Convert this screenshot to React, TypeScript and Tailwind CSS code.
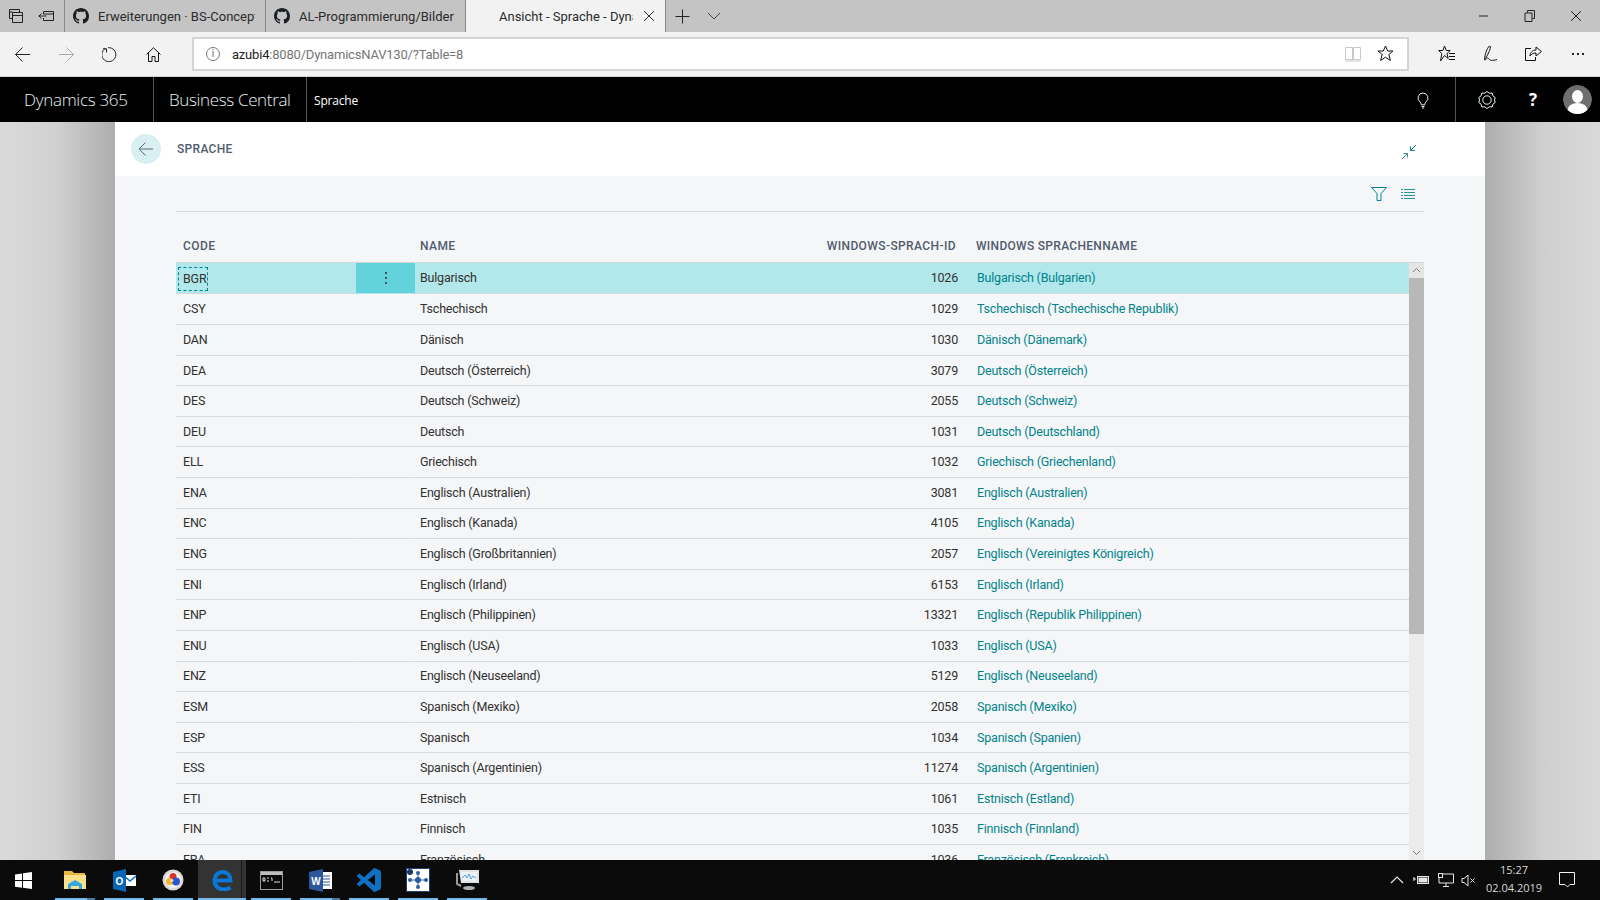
import React from "react";

const rows: [string, string, string, string][] = [
  ["BGR", "Bulgarisch", "1026", "Bulgarisch (Bulgarien)"],
  ["CSY", "Tschechisch", "1029", "Tschechisch (Tschechische Republik)"],
  ["DAN", "Dänisch", "1030", "Dänisch (Dänemark)"],
  ["DEA", "Deutsch (Österreich)", "3079", "Deutsch (Österreich)"],
  ["DES", "Deutsch (Schweiz)", "2055", "Deutsch (Schweiz)"],
  ["DEU", "Deutsch", "1031", "Deutsch (Deutschland)"],
  ["ELL", "Griechisch", "1032", "Griechisch (Griechenland)"],
  ["ENA", "Englisch (Australien)", "3081", "Englisch (Australien)"],
  ["ENC", "Englisch (Kanada)", "4105", "Englisch (Kanada)"],
  ["ENG", "Englisch (Großbritannien)", "2057", "Englisch (Vereinigtes Königreich)"],
  ["ENI", "Englisch (Irland)", "6153", "Englisch (Irland)"],
  ["ENP", "Englisch (Philippinen)", "13321", "Englisch (Republik Philippinen)"],
  ["ENU", "Englisch (USA)", "1033", "Englisch (USA)"],
  ["ENZ", "Englisch (Neuseeland)", "5129", "Englisch (Neuseeland)"],
  ["ESM", "Spanisch (Mexiko)", "2058", "Spanisch (Mexiko)"],
  ["ESP", "Spanisch", "1034", "Spanisch (Spanien)"],
  ["ESS", "Spanisch (Argentinien)", "11274", "Spanisch (Argentinien)"],
  ["ETI", "Estnisch", "1061", "Estnisch (Estland)"],
  ["FIN", "Finnisch", "1035", "Finnisch (Finnland)"],
  ["FRA", "Französisch", "1036", "Französisch (Frankreich)"],
];

const Ln = ({ d, c = "#1a1a1a", s = 16, w = 1, vb = 16 }: { d: string; c?: string; s?: number; w?: number; vb?: number }) => (
  <svg width={s} height={s} viewBox={`0 0 ${vb} ${vb}`} fill="none" stroke={c} strokeWidth={w}>
    <path d={d} />
  </svg>
);

const GitHub = () => (
  <svg width="16" height="16" viewBox="0 0 16 16" fill="#1b1f23">
    <path d="M8 0C3.58 0 0 3.58 0 8c0 3.54 2.29 6.53 5.47 7.59.4.07.55-.17.55-.38 0-.19-.01-.82-.01-1.49-2.01.37-2.53-.49-2.69-.94-.09-.23-.48-.94-.82-1.13-.28-.15-.68-.52-.01-.53.63-.01 1.08.58 1.23.82.72 1.21 1.87.87 2.33.66.07-.52.28-.87.51-1.07-1.78-.2-3.64-.89-3.64-3.95 0-.87.31-1.59.82-2.15-.08-.2-.36-1.02.08-2.12 0 0 .67-.21 2.2.82.64-.18 1.32-.27 2-.27s1.36.09 2 .27c1.53-1.04 2.2-.82 2.2-.82.44 1.1.16 1.92.08 2.12.51.56.82 1.27.82 2.15 0 3.07-1.87 3.75-3.65 3.95.29.25.54.73.54 1.48 0 1.07-.01 1.93-.01 2.2 0 .21.15.46.55.38A8.01 8.01 0 0 0 16 8c0-4.42-3.58-8-8-8z" />
  </svg>
);

function Tab({ title, active, w = 200 }: { title: string; active?: boolean; w?: number }) {
  return (
    <div
      className={`h-full flex items-center shrink-0 border-r border-[#8a8a8a] ${active ? "bg-[#f2f2f2] pl-[33px]" : "pl-[8px]"}`}
      style={{ width: w }}
    >
      {!active && <span className="w-[16px] mr-[9px] shrink-0 flex"><GitHub /></span>}
      <span className={`overflow-hidden whitespace-nowrap text-[13px] text-[#2b2b2b] pt-[1px] ${active ? "w-[134px]" : "w-[157px]"}`}>{title}</span>
      {active && (
        <span className="ml-[10px] flex">
          <Ln s={12} vb={12} c="#333" d="M1 1l10 10M11 1L1 11" />
        </span>
      )}
    </div>
  );
}

function Task({ children, active, w = 40, ml = 9, dark }: { children: React.ReactNode; active?: boolean; w?: number; ml?: number; dark?: boolean }) {
  return (
    <div
      className={`relative h-full flex items-center justify-center shrink-0 ${active ? "bg-[#333333]" : ""}`}
      style={{ width: w, marginLeft: ml }}
    >
      {children}
      <div className="absolute left-0 right-0 bottom-0 h-[2px] bg-[#76b9ed]" />
      {dark && <div className="absolute right-0 bottom-0 h-[2px] w-[8px] bg-[#4d7a9c]" />}
    </div>
  );
}

export default function App() {
  return (
    <div className="w-[1600px] h-[900px] overflow-hidden flex flex-col font-['Roboto',sans-serif] bg-[#d4d4d4]">
      {/* tab strip */}
      <div className="h-[32px] shrink-0 bg-[#c4c4c4] flex items-center">
        <div className="w-[65px] h-full flex items-center border-r border-[#8a8a8a] shrink-0 pl-[9px] gap-[15px]">
          <Ln d="M0.500 0.500h10v3M0.500 0.500v9h3M3.500 3.500h10v10h-10zM3.500 6.500h10M0.500 3h3" s={14} vb={14} c="#222" />
          <Ln d="M5.500 3.500h10v9h-10M5.500 3.500v2.500M5.500 10v2.500M5.500 6h10M0.500 8h8M3.500 5.500L1 8l2.500 2.500" s={16} c="#222" />
        </div>
        <Tab title="Erweiterungen · BS-Concept" w={201} />
        <Tab title="AL-Programmierung/Bilder" w={200} />
        <Tab active title="Ansicht - Sprache - Dynamics" />
        <div className="flex items-center ml-[9px]">
          <Ln s={15} vb={15} c="#222" d="M7.500 0.500v14M0.500 7.500h14" />
          <span className="ml-[17px] flex"><Ln s={14} vb={14} c="#444" d="M1 4l6 6 6-6" /></span>
        </div>
        <div className="ml-auto flex items-center">
          <span className="w-[46px] flex justify-center"><Ln s={12} vb={12} c="#222" d="M1 6h9" /></span>
          <span className="w-[46px] flex justify-center"><Ln s={12} vb={12} c="#222" d="M3.500 2.500v-2h7v8h-2M1 3h7v8.500H1z" /></span>
          <span className="w-[46px] flex justify-center mr-[1px]"><Ln s={12} vb={12} c="#222" d="M1 1l10 10M11 1L1 11" /></span>
        </div>
      </div>

      {/* address bar */}
      <div className="h-[45px] shrink-0 bg-[#f2f2f2] border-b border-[#cfcfcf] flex items-center">
        <div className="w-[192px] flex items-center shrink-0">
          <span className="w-[45px] pl-[15px] flex"><Ln s={15} vb={15} c="#222" d="M0.500 7.500h15M7.500 0.500l-7 7 7 7" /></span>
          <span className="w-[44px] pl-[14px] flex"><Ln s={15} vb={15} c="#aaa" d="M0 7.500h15M7.500 0.500l7 7-7 7" /></span>
          <span className="w-[44px] pl-[13px] flex"><Ln s={15} vb={15} c="#222" d="M3.500 1.500A7 7 0 1 0 6 0.700M0.800 1.800h3.700v3.700" /></span>
          <span className="pl-[13px] flex"><Ln s={15} vb={15} c="#111" d="M0.500 7.500L7.500 0.800l7 6.700M2.500 6v8.500h3.500v-5h3v5h3.500V6" /></span>
        </div>
        <div className="w-[1217px] h-[34px] bg-white border-2 border-[#d4d4d4] flex items-center shrink-0 mt-[-1px]">
          <span className="ml-[12px] w-[14px] h-[14px] rounded-full border border-[#777] text-[#666] text-[10px] leading-[12px] text-center">i</span>
          <span className="ml-[12px] text-[13px] tracking-[-0.2px] text-[#222] mt-[2px]">azubi4<span className="text-[#767676]">:8080/DynamicsNAV130/?Table=8</span></span>
          <span className="ml-auto flex"><Ln s={16} vb={16} c="#c8c8c8" d="M0.500 1.500h7v12h-7zM8.500 1.500h7v12h-7zM7.500 13.500c.4.800.6.800 1 0M0.500 15h15" /></span>
          <span className="ml-[16px] mr-[13px] flex"><Ln s={17} vb={17} c="#111" d="M8.500 1l2.200 5h5.300l-4.200 3.500 1.600 6-4.900-3.300-4.900 3.300 1.600-6L1 6h5.300z" /></span>
        </div>
        <div className="flex items-center">
          <span className="w-[43px] ml-[29px] flex"><Ln s={18} vb={18} c="#111" d="M6.500 1l1.700 4.500h4L9 8.500l1.200 5-3.700-3L2.500 16l1.300-7.500L0.700 5.500h4.200zM11 8.500h6M11 11.500h6M11 14.500h6" /></span>
          <span className="w-[43px] flex"><Ln s={18} vb={18} c="#111" d="M3.500 14.500C4 9 6 3 8.500 1c1.500 0 1 3-1 7-1.500 3-3 5.500-4 6.500zM4 15.500c2-3 3-3 4-1.500s3 2 8 .5" /></span>
          <span className="w-[48px] flex"><Ln s={18} vb={18} c="#111" d="M7 3.500H1.500v12h10V12M6 11c0-3.500 2.500-6 6-6V2l5.500 4.500L12 11V8c-3 0-4.500 1-6 3z" /></span>
          <span className="flex gap-[3px]">
            <i className="w-[2px] h-[2px] bg-[#222] block" /><i className="w-[2px] h-[2px] bg-[#222] block" /><i className="w-[2px] h-[2px] bg-[#222] block" />
          </span>
        </div>
      </div>

      {/* app bar */}
      <div className="h-[45px] shrink-0 bg-black flex items-stretch text-white font-['Open_Sans',sans-serif]">
        <div className="w-[154px] border-r border-[#555] flex items-center pl-[24px] text-[17px] font-light tracking-[-0.3px] text-[#e8f2f4]">Dynamics 365</div>
        <div className="w-[153px] border-r border-[#555] flex items-center pl-[15px] text-[17px] font-light tracking-[-0.35px] text-[#e8f2f4]">Business Central</div>
        <div className="flex items-center pl-[7px] pt-[2px] text-[12px] tracking-[-0.2px]">Sprache</div>
        <div className="ml-auto w-[66px] border-r border-[#555] flex items-center pl-[24px]">
          <Ln s={18} vb={18} c="#e4f3f6" d="M9 2a5 5 0 0 0-3.200 8.800c.9.800 1.400 1.700 1.500 3h3.400c.1-1.300.6-2.200 1.500-3A5 5 0 0 0 9 2zM7.500 15.500h3M8 17h2" />
        </div>
        <div className="w-[107px] flex items-center shrink-0">
          <span className="ml-[22px] flex"><Ln s={18} vb={18} c="#e4f3f6" d="M9 0.500l2.300 1.700 2.800-.2.800 2.800 2.300 1.700L16.500 9l.700 2.500-2.300 1.700-.8 2.800-2.800-.2L9 17.500l-2.300-1.700-2.800.2-.8-2.800-2.300-1.700L1.500 9 .800 6.500l2.300-1.700.8-2.800 2.800.2zM9 4.800a4.200 4.200 0 1 0 0 8.400 4.200 4.200 0 0 0 0-8.400z" /></span>
          <span className="ml-[33px] text-[17px] font-bold">?</span>
        </div>
        <div className="w-[29px] h-[29px] rounded-full self-center mr-[8px] overflow-hidden flex justify-center shrink-0">
          <svg width="29" height="29" viewBox="0 0 29 29"><circle cx="14.500" cy="14.500" r="14.500" fill="#6e6e6e" /><ellipse cx="14.500" cy="11.500" rx="5.500" ry="6.500" fill="#fff" /><ellipse cx="14.500" cy="25" rx="10" ry="7" fill="#fff" /></svg>
        </div>
      </div>

      {/* workspace */}
      <div className="flex-1 min-h-0 flex">
        <div className="w-[115px] shrink-0 bg-linear-to-r from-[#dadada] via-[#d0d0d0] to-[#adadad]" />
        <div className="w-[1370px] shrink-0 flex flex-col bg-[#f5f6f8] min-h-0">
          <div className="h-[54px] shrink-0 bg-white flex items-center pl-[16px] pr-[68px]">
            <div className="w-[30px] h-[30px] rounded-full bg-[#d9f0f3] flex items-center justify-center">
              <Ln s={16} vb={16} c="#5f6b76" d="M15 8H1M7.500 1.500L1 8l6.500 6.500" />
            </div>
            <span className="ml-[16px] text-[12px] font-medium text-[#505c6d] mt-[-1px] tracking-[0.3px]">SPRACHE</span>
            <span className="ml-auto flex mt-[6px]">
              <svg width="16" height="16" viewBox="0 0 16 16" fill="none" stroke="#00838f"><path d="M15 1L9.500 6.500M9.500 2.500v4h4" /><path d="M1 15l5.500-5.500M6.500 13.500v-4h-4" stroke="#3f8c98" /></svg>
            </span>
          </div>
          <div className="mx-[61px] flex-1 min-h-0 flex flex-col">
            <div className="h-[36px] shrink-0 border-b border-[#d5d6d8] flex items-center justify-end pr-[9px] pt-[1px]">
              <svg width="16" height="14" viewBox="0 0 16 14" fill="none" stroke="#00838f"><path d="M0.500 0.500h15L10 6.500v7H6v-7z" /></svg>
              <svg className="ml-[14px]" width="14" height="12" viewBox="0 0 14 12" fill="none" stroke="#2a8f9c"><path d="M0 1.500h2M3 1.500h11M0 4.500h2M3 4.500h11M0 7.500h2M3 7.500h11M0 10.500h2M3 10.500h11" /></svg>
            </div>
            <div className="h-[50px] shrink-0 flex items-center pt-[17px] text-[12px] font-medium text-[#505c6d] tracking-[0.4px]">
              <span className="w-[244px] pl-[7px]">CODE</span>
              <span className="w-[329px]">NAME</span>
              <span className="w-[207px] text-right whitespace-nowrap">WINDOWS-SPRACH-ID</span>
              <span className="ml-[20px] tracking-[0.3px]">WINDOWS SPRACHENNAME</span>
            </div>
            <div className="flex-1 min-h-0 flex overflow-hidden border-t border-[#d5d6d8]">
              <div className="flex-1 min-w-0 text-[12.5px] tracking-[-0.2px] text-[#323130]">
                {rows.map((r, i) => {
                  const sel = i === 0;
                  return (
                    <div key={r[0]} className={`flex ${sel ? "bg-[#b2e8ec] h-[31.4px]" : "h-[30.6px]"}`}>
                      <div className="w-[180px] shrink-0 border-b border-[#d8d9db] flex items-center pl-[2px] pt-[1px]">
                        {sel ? (
                          <span className="h-[24px] w-[30px] border border-dashed border-[#00838f] pl-[4px] leading-[22px]">{r[0]}</span>
                        ) : (
                          <span className="pl-[5px]">{r[0]}</span>
                        )}
                      </div>
                      <div className={`w-[59px] shrink-0 flex items-center justify-center border-b border-l border-r ${sel ? "bg-[#62d3db] border-[#62d3db] border-b-[#b2e8ec]" : "border-l-[#f5f6f8] border-r-[#f5f6f8] border-b-[#d8d9db]"}`}>
                        {sel && (
                          <span className="flex flex-col gap-[3px]">
                            <i className="w-[2px] h-[2px] rounded-full bg-[#323130] block" /><i className="w-[2px] h-[2px] rounded-full bg-[#323130] block" /><i className="w-[2px] h-[2px] rounded-full bg-[#323130] block" />
                          </span>
                        )}
                      </div>
                      <div className="flex-1 border-b border-[#d8d9db] flex items-center pt-[1px]">
                        <span className="w-[334px] pl-[5px]">{r[1]}</span>
                        <span className="w-[209px] text-right">{r[2]}</span>
                        <span className="ml-[19px] text-[#00838a]">{r[3]}</span>
                      </div>
                    </div>
                  );
                })}
              </div>
              <div className="w-[15px] shrink-0 bg-[#ececec] flex flex-col">
                <div className="h-[15px] shrink-0 bg-[#e5e5e5] flex items-center justify-center"><Ln s={9} vb={9} c="#777" d="M1 6l3.500-3.500L8 6" /></div>
                <div className="h-[356px] shrink-0 bg-[#b8b8b8]" />
                <div className="flex-1" />
                <div className="h-[15px] shrink-0 flex items-center justify-center"><Ln s={9} vb={9} c="#777" d="M1 3l3.500 3.500L8 3" /></div>
              </div>
            </div>
          </div>
        </div>
        <div className="flex-1 bg-linear-to-r from-[#adadad] via-[#cfcfcf] to-[#dadada]" />
      </div>

      {/* taskbar */}
      <div className="h-[40px] shrink-0 bg-[#0b0b0b] flex items-stretch relative font-['Open_Sans',sans-serif]">
        <div className="w-[46px] flex items-center justify-center shrink-0">
          <svg width="17" height="17" viewBox="0 0 17 17" fill="#fff"><path d="M0 2.400L7 1.400v6.700H0zM8 1.300L17 0v8.100H8zM0 9h7v6.700L0 14.700zM8 9h9v8L8 15.800z" /></svg>
        </div>
        <Task dark>
          <svg width="22" height="19" viewBox="0 0 22 19"><path d="M0 0h8l2 2h11v4H0z" fill="#e8b93f" /><rect x="0" y="4" width="22" height="14" fill="#fbe08c" /><path d="M4 18v-5l7-4 7 4v5h-3v-3H7v3z" fill="#35a7e0" /></svg>
        </Task>
        <Task>
          <svg width="23" height="23" viewBox="0 0 23 23"><rect x="10" y="6" width="13" height="11" fill="#fff" /><path d="M11 7l6 5 6-5" fill="none" stroke="#0a6dbd" strokeWidth="1.500" /><path d="M0 3l13-3v23L0 20z" fill="#0a66b5" /><text x="6.500" y="15.500" textAnchor="middle" fontSize="10" fontWeight="700" fill="#fff" fontFamily="Liberation Sans, sans-serif">O</text></svg>
        </Task>
        <Task>
          <svg width="22" height="22" viewBox="0 0 22 22"><circle cx="11" cy="11" r="10.500" fill="#dcd8d4" /><circle cx="11" cy="11" r="8" fill="#f5f1ee" /><circle cx="11" cy="7.500" r="3.500" fill="#d8362a" /><circle cx="7.500" cy="12.500" r="3.500" fill="#f3b52e" /><circle cx="14" cy="12.500" r="4" fill="#2f56c7" /><circle cx="10" cy="11.500" r="1.500" fill="#fff" opacity=".7" /></svg>
        </Task>
        <Task active w={48} ml={5}>
          <svg width="21" height="21" viewBox="0 0 21 21" fill="none" stroke="#0b78d7" strokeWidth="4"><path d="M2.500 10.500h16c0-5-3-8.500-8-8.500-4.500 0-8 3.500-8 8.500 0 5.500 4 9 9 9 3 0 5-.8 7-2" /></svg>
          <div className="absolute right-[4px] top-0 bottom-0 w-px bg-[#1a1a1a]" />
        </Task>
        <Task ml={5}>
          <svg width="23" height="19" viewBox="0 0 23 19"><rect x="0.500" y="0.500" width="22" height="18" fill="#0a0a0a" stroke="#9a9a9a" /><rect x="1" y="1" width="21" height="3" fill="#bdbdbd" /><path d="M3 7h2v3H3zM7 7h2M7 10h2M11 7h1v3M14 11h6" stroke="#ddd" fill="none" /></svg>
        </Task>
        <Task dark>
          <svg width="23" height="23" viewBox="0 0 23 23"><rect x="10" y="3" width="13" height="17" fill="#fff" /><path d="M14 7h7M14 10h7M14 13h7M14 16h7" stroke="#2b579a" /><path d="M0 3l14-3v23L0 20z" fill="#2b579a" /><text x="7" y="15.500" textAnchor="middle" fontSize="10" fontWeight="700" fill="#fff" fontFamily="Liberation Sans, sans-serif">W</text></svg>
        </Task>
        <Task>
          <svg width="24" height="24" viewBox="0 0 24 24" fill="#0f6fc0"><path d="M23.150 2.587L18.210.21a1.494 1.494 0 0 0-1.705.29l-9.460 8.630-4.120-3.128a.999.999 0 0 0-1.276.057L.327 7.261A1 1 0 0 0 .326 8.740L3.899 12 .326 15.260a1 1 0 0 0 .001 1.479L1.650 17.940a.999.999 0 0 0 1.276.057l4.120-3.128 9.460 8.630a1.492 1.492 0 0 0 1.704.29l4.942-2.377A1.500 1.500 0 0 0 24 20.060V3.939a1.500 1.500 0 0 0-.85-1.352zm-5.146 14.861L10.826 12l7.178-5.448v10.896z" /></svg>
        </Task>
        <Task>
          <svg width="24" height="24" viewBox="0 0 24 24"><rect x="0.500" y="0.500" width="23" height="23" fill="#fff" stroke="#1f3f77" /><path d="M3 12h18M12 12V6M12 12v6" stroke="#2c5da8" /><circle cx="12" cy="12" r="3" fill="#2c5da8" /><circle cx="12" cy="5" r="2" fill="#2c5da8" /><circle cx="12" cy="19" r="2" fill="#2c5da8" /><circle cx="20" cy="12" r="2" fill="#2c5da8" /><circle cx="4" cy="12" r="2" fill="#2c5da8" /><circle cx="4" cy="4" r="3" fill="#1b3763" /></svg>
        </Task>
        <Task>
          <svg width="23" height="22" viewBox="0 0 23 22"><path d="M3 1h20v13H5z" fill="#dfe3e6" /><path d="M5 3h16v9H6z" fill="#eef2f4" /><path d="M6 9l3-3 2 3 2-4 2 5 2-3 3 2" fill="none" stroke="#4a9fd8" /><path d="M1 4v11l4 2" fill="none" stroke="#9a9a9a" strokeWidth="2" /><ellipse cx="13" cy="19" rx="6" ry="2" fill="#aeb3b6" /></svg>
        </Task>

        <div className="ml-auto flex items-center text-[#e6e6e6]">
          <span className="flex"><Ln s={14} vb={14} c="#e6e6e6" d="M1 10l6-6 6 6" w={1.200} /></span>
          <span className="ml-[9px] flex"><svg width="17" height="12" viewBox="0 0 17 12" fill="none" stroke="#e6e6e6"><path d="M0 5h3M1 3v4" /><rect x="4.500" y="2.500" width="11" height="7" /><rect x="6" y="4" width="8" height="4" fill="#e6e6e6" /></svg></span>
          <span className="ml-[8px] flex"><svg width="16" height="14" viewBox="0 0 16 14" fill="none" stroke="#e6e6e6"><path d="M4 1h11.500v9H1V5M8 10v3M5 13.500h6" /><rect x="0.500" y="0.500" width="4" height="4" /></svg></span>
          <span className="ml-[7px] flex"><Ln s={15} vb={15} c="#e6e6e6" d="M1 5.500v4h2l4 3.500V2L3 5.500zM9.500 5.500l4 4M13.500 5.500l-4 4" /></span>
          <div className="w-[76px] text-center text-[11px] leading-[18px] text-[#d8d8d8] mt-[-2px]">
            <div>15:27</div>
            <div>02.04.2019</div>
          </div>
          <span className="ml-[7px] mr-[25px] flex"><Ln s={16} vb={16} c="#f2f2f2" d="M0.500 0.500h15v12H11l-2.500 2.500-2.500-2.500H0.500z" /></span>
        </div>
      </div>
    </div>
  );
}
